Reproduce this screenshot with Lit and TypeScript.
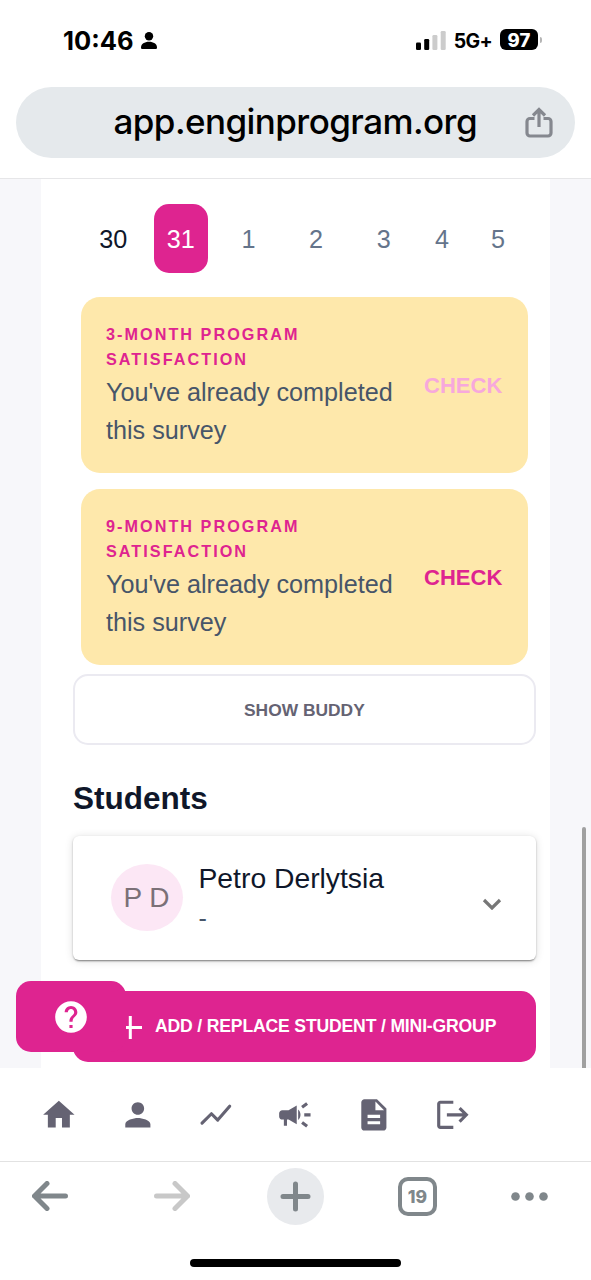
import { LitElement, html, svg, css, TemplateResult } from "lit";
import { customElement, property } from "lit/decorators.js";
import { classMap } from "lit/directives/class-map.js";

const NAV_ICONS: TemplateResult[] = [
  svg`<path d="M10 20v-6h4v6h5v-8h3L12 3 2 12h3v8z"/>`,
  svg`<path d="M12 12c2.21 0 4-1.79 4-4s-1.79-4-4-4-4 1.79-4 4 1.79 4 4 4zm0 2c-2.67 0-8 1.34-8 4v2h16v-2c0-2.66-5.33-4-8-4z"/>`,
  svg`<path d="M3.200 17.300L9.200 11.300 13.200 15.300 20.800 6.500" fill="none" stroke="#656373" stroke-width="2" stroke-linecap="round" stroke-linejoin="round"/>`,
  svg`<path d="M18 11v2h4v-2zM16 17.600l3.200 2.400 1.200-1.600-3.200-2.400zM20.400 5.600L19.200 4 16 6.400 17.200 8zM4 9c-1.100 0-2 .9-2 2v2c0 1.100.9 2 2 2h1v4h2v-4h1l5.200 3V6L8 9zM15.600 12c0-1.330-.58-2.530-1.500-3.350v6.690c.92-.81 1.500-2.010 1.500-3.340z"/>`,
  svg`<path d="M14 2H6c-1.100 0-1.990.9-1.990 2L4 20c0 1.100.89 2 1.990 2H18c1.100 0 2-.9 2-2V8l-6-6zm2 16H8v-2h8v2zm0-4H8v-2h8v2zm-3-5V3.500L18.500 9H13z"/>`,
  svg`<path d="M12.300 3H4c-1.100 0-2 .9-2 2v14c0 1.100.9 2 2 2h8.300v-2H4V5h8.300zM17 7l-1.400 1.400 2.600 2.600H8.200v2h10l-2.600 2.600L17 17l5-5z"/>`,
];

@customElement("status-bar")
class StatusBar extends LitElement {
  static styles = css`
    :host { display: flex; height: 87px; box-sizing: border-box; padding: 26px 49px 0 63px; align-items: flex-start; color: #000; font-family: Inter, sans-serif; }
    .time { width: 71px; font-size: 25.500px; line-height: 29px; font-weight: 700; white-space: nowrap; }
    .person { width: 16px; height: 18px; margin: 6px 0 0 7px; }
    .space { flex: 1; }
    .bars { width: 30px; height: 19px; margin: 4.500px 8px 0 0; }
    .net { font-size: 19.500px; line-height: 30px; font-weight: 700; letter-spacing: -.7px; margin-right: 8px; }
    .battery { width: 38px; height: 21px; border-radius: 6px; margin-top: 3px; background: #000; color: #fff; text-align: center; font-size: 18.500px; line-height: 22px; font-weight: 800; }
    .tip { width: 2px; height: 6px; border-radius: 0 3px 3px 0; background: #b5b5b5; margin: 11px 0 0 2px; }
  `;
  render() {
    return html`
      <span class="time">10:46</span>
      <svg class="person" viewBox="0 0 16 18"><circle cx="8" cy="4.200" r="4.200"/><path d="M0 15.500C0 12 3.500 9.800 8 9.800s8 2.200 8 5.700c0 1-.6 1.500-1.500 1.500h-13C.6 17 0 16.500 0 15.500z"/></svg>
      <span class="space"></span>
      <svg class="bars" viewBox="0 0 30 19">
        <rect x="0" y="11.500" width="5" height="7.500" rx="1.300"/><rect x="8.200" y="8" width="5" height="11" rx="1.300"/>
        <rect x="16.400" y="4" width="5" height="15" rx="1.300" fill="#ccc"/><rect x="24.700" y="0" width="5" height="19" rx="1.300" fill="#ccc"/>
      </svg>
      <span class="net">5G+</span><span class="battery">97</span><span class="tip"></span>`;
  }
}

@customElement("survey-card")
class SurveyCard extends LitElement {
  @property() heading = "";
  @property({ type: Boolean }) faded = false;
  static styles = css`
    :host { display: flex; align-items: center; justify-content: space-between; box-sizing: border-box; height: 176px; padding: 0 25.500px 0 25px; border-radius: 19px; background: #fee8ab; }
    .title { width: 220px; color: #de2490; font-size: 16.200px; line-height: 25.200px; font-weight: 700; letter-spacing: 2.050px; }
    .body { width: 300px; color: #475569; font-size: 25.200px; line-height: 37.800px; padding-top: 2px; margin-bottom: -2px; }
    .check { color: #de2490; font-weight: 700; font-size: 22px; line-height: 38px; padding-top: 1px; }
    .faded { color: #f7a8dc; }
  `;
  render() {
    return html`<div><div class="title">${this.heading}</div><div class="body">You've already completed this survey</div></div>
      <span class=${classMap({ check: true, faded: this.faded })}>CHECK</span>`;
  }
}

@customElement("app-root")
class AppRoot extends LitElement {
  static styles = css`
    :host { display: flex; flex-direction: column; width: 591px; height: 1280px; overflow: hidden; background: #fff; font-family: "Liberation Sans", Arial, sans-serif; }
    .address { display: flex; align-items: center; justify-content: space-between; box-sizing: border-box; height: 71px; margin: 0 16px 20px; padding: 0 22px 0 97.500px; border-radius: 36px; background: #e5e9ec; flex: none; }
    .url { font: 500 35px/68px Inter, sans-serif; height: 71px; color: #000; white-space: nowrap; letter-spacing: -.57px; }
    .share { width: 28px; height: 32px; flex: none; margin-top: 1px; }
    .page { position: relative; flex: none; height: 889.500px; box-sizing: border-box; background: #f7f7fa; border-top: 1px solid #e6e6e8; padding: 0 41.200px; }
    .column { display: flex; flex-direction: column; height: 100%; box-sizing: border-box; padding: 25px 14px 0 31.800px; background: #fff; }
    .days { display: grid; grid-template-columns: repeat(5, 67.600px) 49px 63px; height: 69px; margin: 0 0 24px 6.500px; place-items: center; font-size: 25.200px; color: #64748b; }
    .day { display: grid; place-items: center; width: 54.500px; height: 69px; border-radius: 15px; padding-top: 1px; box-sizing: border-box; }
    .today { color: #0f172a; }
    .selected { background: #de2490; color: #fff; }
    .surveys { display: flex; flex-direction: column; gap: 16px; margin: 0 8px 9px; }
    .buddy { display: grid; place-items: center; height: 71px; box-sizing: border-box; border: 2px solid #ebeaf1; border-radius: 15px; color: #656373; font-size: 17.400px; font-weight: 700; padding-top: 1.500px; }
    .heading { margin: 34px 0 19px; color: #0f172a; font-size: 31.500px; line-height: 38px; font-weight: 700; }
    .student { display: flex; box-sizing: border-box; height: 123.500px; padding: 28px 34px 0 38px; border-radius: 6px; background: #fff; box-shadow: 0 3px 2px -2px #0004, 0 1px 2px #0004, 0 1px 8px #0002; }
    .avatar { display: grid; place-items: center; width: 72px; height: 67px; border-radius: 50%; background: #fce7f5; color: #7b7077; font-size: 28px; box-sizing: border-box; padding-right: 1px; }
    .who { flex: 1; padding-left: 15.500px; margin-top: -5px; color: #0f172a; font-size: 28.300px; line-height: 38px; }
    .note { color: #475569; font-size: 25px; line-height: 43px; }
    .chevron { width: 20px; height: 12px; margin-top: 34px; }
    .add { display: flex; align-items: center; height: 71px; box-sizing: border-box; margin-top: 31px; padding-left: 52px; border-radius: 15px; background: #de2490; color: #fff; font-size: 17.600px; letter-spacing: -.17px; font-weight: 700; white-space: nowrap; }
    .plus { width: 17px; height: 23px; margin: 2px 13px 0 0; }
    .help { position: absolute; left: 16px; bottom: 15.500px; width: 109.500px; height: 71px; border-radius: 15px; background: #de2490; display: grid; place-items: center; }
    .help svg { width: 38px; height: 38px; }
    .scroll { position: absolute; right: 4.700px; bottom: 0; width: 4.800px; height: 241px; border-radius: 3px 3px 0 0; background: #a0a0a0; }
    .nav { display: grid; grid-template-columns: repeat(6, 78.800px); place-items: center; box-sizing: border-box; height: 94.500px; padding: 1px 0 0 19.300px; border-bottom: 1px solid #e2e2e2; flex: none; }
    .nav svg { width: 37.700px; height: 37.700px; fill: #656373; }
    .tools { display: grid; grid-template-columns: 99px 146px 101px 143px 80px; place-items: center; height: 68px; flex: none; }
    .arrow { width: 36px; height: 30px; fill: none; stroke: #80878b; stroke-width: 5; stroke-linecap: round; stroke-linejoin: round; }
    .off { stroke: #c8c8c8; }
    .new { width: 57px; height: 57px; }
    .tabs { display: grid; place-items: center; width: 39px; height: 39px; box-sizing: border-box; border: 4px solid #80878b; border-radius: 10px; color: #80878b; font: 800 17.500px/20px Inter, sans-serif; padding-top: 1px; }
    .more { width: 37px; height: 9px; fill: #80878b; }
    .home { width: 211px; height: 8px; margin: 29.300px 0 0 190px; border-radius: 4px; background: #000; flex: none; }
  `;
  render() {
    const days = ["30", "31", "1", "2", "3", "4", "5"];
    return html`
      <status-bar></status-bar>
      <div class="address">
        <span class="url">app.enginprogram.org</span>
        <svg class="share" viewBox="0 0 28 32" fill="none" stroke="#85888f" stroke-width="3.200"><path d="M9.500 11.500H5a3 3 0 0 0-3 3V26a3 3 0 0 0 3 3h18a3 3 0 0 0 3-3V14.500a3 3 0 0 0-3-3h-4.500M14 20V3.500M8 8.500l6-6 6 6"/></svg>
      </div>
      <main class="page">
        <div class="column">
          <div class="days">${days.map((d, i) => html`<span class=${classMap({ day: true, today: i === 0, selected: i === 1 })}>${d}</span>`)}</div>
          <div class="surveys">
            <survey-card heading="3-MONTH PROGRAM SATISFACTION" faded></survey-card>
            <survey-card heading="9-MONTH PROGRAM SATISFACTION"></survey-card>
          </div>
          <div class="buddy">SHOW BUDDY</div>
          <div class="heading">Students</div>
          <div class="student">
            <span class="avatar">P D</span>
            <div class="who">Petro Derlytsia<div class="note">-</div></div>
            <svg class="chevron" viewBox="0 0 20 12"><path d="M2 2l8 8 8-8" fill="none" stroke="#777" stroke-width="3.200"/></svg>
          </div>
          <div class="add"><svg class="plus" viewBox="0 0 17 23"><path d="M5.300 0v23M0 11.500h17" stroke="#fff" stroke-width="3" fill="none"/></svg>ADD / REPLACE STUDENT / MINI-GROUP</div>
        </div>
        <div class="help"><svg viewBox="0 0 24 24" fill="#fff"><path d="M12 2C6.480 2 2 6.480 2 12s4.480 10 10 10 10-4.480 10-10S17.520 2 12 2zm1 17h-2v-2h2v2zm2.070-7.750l-.9.920C13.450 12.900 13 13.500 13 15h-2v-.5c0-1.100.45-2.100 1.170-2.830l1.240-1.260c.37-.36.590-.86.590-1.410 0-1.100-.9-2-2-2s-2 .9-2 2H8c0-2.210 1.790-4 4-4s4 1.790 4 4c0 .88-.36 1.680-.93 2.250z"/></svg></div>
        <div class="scroll"></div>
      </main>
      <nav class="nav">${NAV_ICONS.map((icon) => html`<svg viewBox="0 0 24 24">${icon}</svg>`)}</nav>
      <div class="tools">
        <svg class="arrow" viewBox="0 0 36 30"><path d="M33.500 15h-31M15 2.500L2.500 15 15 27.500"/></svg>
        <svg class="arrow off" viewBox="0 0 36 30"><path d="M2.500 15h31M21 2.500L33.500 15 21 27.500"/></svg>
        <svg class="new" viewBox="0 0 57 57"><circle cx="28.500" cy="28.500" r="28.500" fill="#e8eaed"/><path d="M28.500 16v25M16 28.500h25" stroke="#80878b" stroke-width="5" stroke-linecap="round"/></svg>
        <span class="tabs">19</span>
        <svg class="more" viewBox="0 0 37 9"><circle cx="4.500" cy="4.500" r="4.300"/><circle cx="18.500" cy="4.500" r="4.300"/><circle cx="32.500" cy="4.500" r="4.300"/></svg>
      </div>
      <div class="home"></div>`;
  }
}
